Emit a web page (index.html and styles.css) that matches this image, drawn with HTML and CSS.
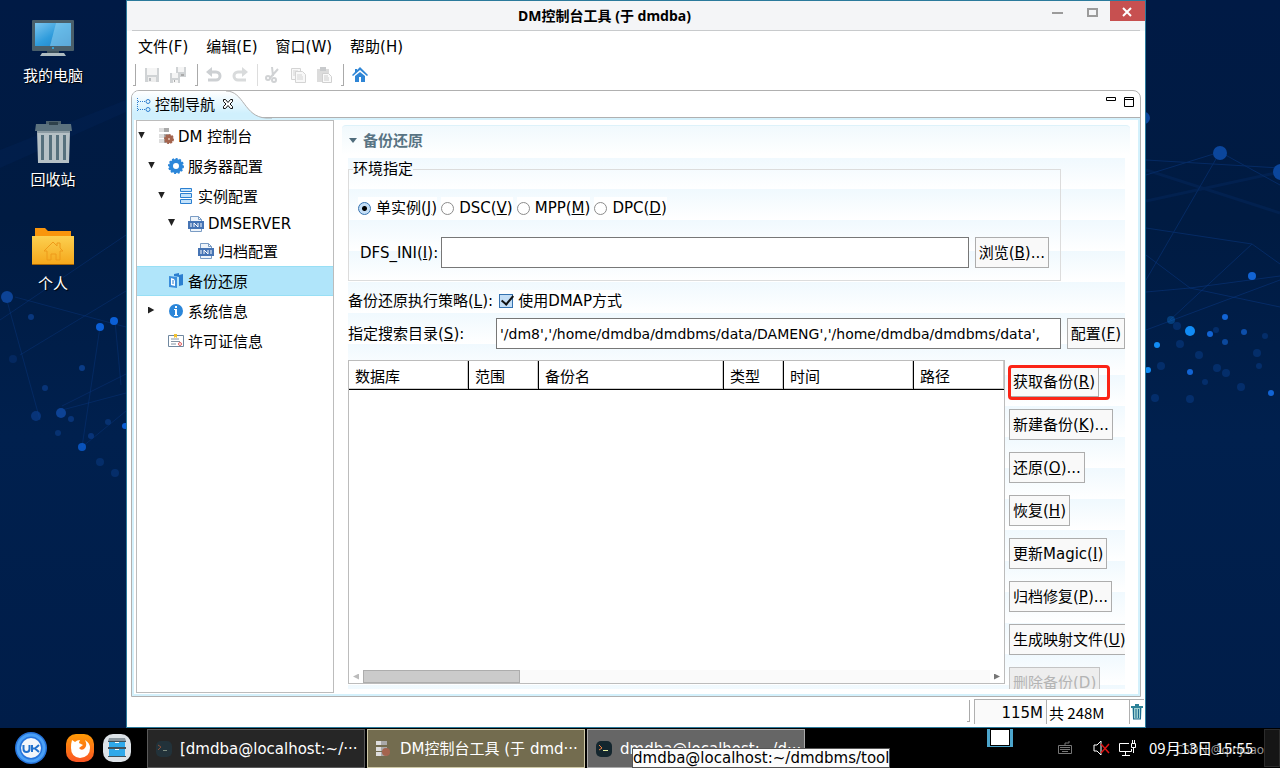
FILE: index.html
```html
<!DOCTYPE html>
<html lang="zh-CN">
<head>
    <meta charset="UTF-8">
    <title>DM控制台工具</title>
    <link rel="stylesheet" href="styles.css">
</head>
<body>
<div class="desktop">
    <!-- wallpaper, left and right parts keep to their own side -->
    <svg class="wall wall-left" width="126" height="728" viewBox="0 0 126 728">
        <g stroke="#0a3a85" stroke-width="1" opacity=".4">
            <path d="M15 297L126 327M62 406L126 374M62 410L126 393M100 327L82 447M115 321L121 385M82 447L126 411M0 320L126 235M20 355L126 291M6 297L40 420" fill="none"/>
        </g>
        <path d="M0 150L126 100V112L0 168z" fill="#0a3a85" opacity=".12"/>
        <g fill="#0d4396">
            <circle cx="7" cy="297" r="6"/><circle cx="31" cy="317" r="3" opacity=".7"/><circle cx="36" cy="416" r="5" opacity=".6"/>
            <circle cx="61" cy="413" r="5"/><circle cx="71" cy="419" r="3" opacity=".6"/><circle cx="82" cy="368" r="3" opacity=".8"/>
            <circle cx="45" cy="388" r="3" opacity=".6"/><circle cx="58" cy="433" r="3" opacity=".5"/><circle cx="91" cy="436" r="3" opacity=".6"/>
            <circle cx="108" cy="422" r="3" opacity=".5"/><circle cx="100" cy="462" r="4" opacity=".4"/><circle cx="115" cy="473" r="4" opacity=".4"/>
            <circle cx="13" cy="359" r="4" opacity=".3"/>
        </g>
        <g fill="#0b5fd6"><circle cx="100" cy="327" r="4"/><circle cx="114" cy="321" r="4"/><circle cx="82" cy="447" r="4" opacity=".8"/><circle cx="125" cy="426" r="3"/></g>
    </svg>
    <svg class="wall wall-right" width="134" height="728" viewBox="1146 0 134 728">
        <g stroke="#0a3a85" stroke-width="1" opacity=".5" fill="none">
            <path d="M1146 175L1220 152L1280 185M1220 152L1146 280M1146 228L1252 244L1280 264M1146 255L1190 288L1280 307M1146 292L1190 288L1280 276M1146 330L1280 280M1252 244L1170 320M1146 160L1280 168"/>
            <path d="M1146 170L1280 213M1146 201L1280 172" stroke-width="3" opacity=".4"/>
        </g>
        <g fill="#0b469c"><circle cx="1220" cy="153" r="7"/><circle cx="1281" cy="172" r="8"/><circle cx="1144" cy="118" r="6"/></g>
        <g fill="#1264d4"><circle cx="1252" cy="276" r="4"/><circle cx="1225" cy="317" r="3"/><circle cx="1210" cy="334" r="3"/><circle cx="1190" cy="372" r="3"/><circle cx="1271" cy="393" r="3"/><circle cx="1244" cy="332" r="3" opacity=".7"/><circle cx="1225" cy="342" r="3" opacity=".6"/></g>
        <g fill="#118cf5"><circle cx="1190" cy="331" r="5"/><circle cx="1171" cy="320" r="4" opacity=".3"/><circle cx="1157" cy="345" r="3"/><circle cx="1148" cy="370" r="3"/></g>
        <g fill="#0b469c" opacity=".4">
            <circle cx="1177" cy="326" r="4"/><circle cx="1180" cy="344" r="4"/><circle cx="1161" cy="366" r="4"/><circle cx="1199" cy="355" r="4"/><circle cx="1216" cy="330" r="3"/>
            <circle cx="1257" cy="353" r="4"/><circle cx="1217" cy="368" r="4"/><circle cx="1226" cy="373" r="4"/><circle cx="1241" cy="387" r="4"/><circle cx="1190" cy="399" r="4"/>
            <circle cx="1155" cy="398" r="4"/><circle cx="1265" cy="336" r="3"/><circle cx="1259" cy="366" r="3"/><circle cx="1205" cy="382" r="3"/>
        </g>
    </svg>

    <div class="shortcuts">
        <a class="shortcut" href="#computer">
            <svg width="44" height="44" viewBox="0 0 44 44">
                <defs><linearGradient id="screen" x1="0" y1="0" x2="1" y2="1"><stop offset="0" stop-color="#7cc5ee"/><stop offset=".5" stop-color="#2f9cdc"/><stop offset="1" stop-color="#1c7cc0"/></linearGradient></defs>
                <rect x="1" y="4" width="42" height="31" rx="1" fill="#4a5f6a"/>
                <rect x="4" y="7" width="36" height="23" fill="url(#screen)"/>
                <path d="M25 7h15v23H19z" fill="#9bd5f2" opacity=".5"/>
                <circle cx="22" cy="32" r="1" fill="#31b3f0"/>
                <path d="M16 35h12v2H16z" fill="#3d5059"/><path d="M9 40l2-3h22l2 3z" fill="#aebbc0"/>
            </svg>
            <span>我的电脑</span>
        </a>
        <a class="shortcut" href="#trash">
            <svg width="44" height="44" viewBox="0 0 44 44">
                <path d="M15 5V1h15v4" fill="#4e626d"/><path d="M5 4h35l1 7H4z" fill="#5c727e"/><path d="M18 2h9v3h-9z" fill="#2f424c"/>
                <path d="M6 11h33l-1 32H7z" fill="#b6c1c6"/>
                <path d="M10 15h3v25h-3zM18 15h3v25h-3zM25 15h3v25h-3zM32 15h3v25h-3z" fill="#56707d"/>
                <path d="M6 11h33v2H6z" fill="#8d9ca4"/>
            </svg>
            <span>回收站</span>
        </a>
        <a class="shortcut" href="#home">
            <svg width="44" height="44" viewBox="0 0 44 44">
                <defs><linearGradient id="folder" x1="0" y1="0" x2="0" y2="1"><stop offset="0" stop-color="#fcd050"/><stop offset="1" stop-color="#f5a81c"/></linearGradient></defs>
                <path d="M4 4h10l3 3h23v8H4z" fill="#f9950c"/>
                <path d="M1 12h42v28H1z" fill="url(#folder)"/><path d="M1 40h42v1H1z" fill="#a86404"/>
                <path d="M13 27l9-9 4 4v-3h3v5l3 3h-3v9h-4v-6h-5v6h-4v-9z" fill="none" stroke="#ee9a1a"/>
            </svg>
            <span>个人</span>
        </a>
    </div>

    <main class="window">
        <header class="titlebar">
            <h1>DM控制台工具 (于 dmdba)</h1>
            <div class="winbtns">
                <button aria-label="最小化"><svg width="35" height="20"><path d="M12 11h11v2H12z" fill="#9b9b9b"/></svg></button>
                <button aria-label="最大化"><svg width="35" height="20"><path d="M13 8h9v7h-9z" fill="none" stroke="#9b9b9b" stroke-width="2"/></svg></button>
                <button class="close" aria-label="关闭"><svg width="35" height="20"><path d="M13 7l8 8M21 7l-8 8" stroke="#fff" stroke-width="2"/></svg></button>
            </div>
        </header>
        <nav class="menubar">
            <button>文件(F)</button>
            <button>编辑(E)</button>
            <button>窗口(W)</button>
            <button>帮助(H)</button>
        </nav>
        <div class="toolbar">
            <i class="grip"></i>
            <button disabled aria-label="保存"><svg width="16" height="16"><path d="M1 1h14v14H1z" fill="#d0d3d5"/><path d="M3 1h10v7H3z" fill="#f5f5f5"/><path d="M4 10h8v5H4z" fill="#eee"/><path d="M5 11h2v3H5z" fill="#b9bcbf"/></svg></button>
            <button disabled aria-label="全部保存"><svg width="16" height="16"><path d="M6 0h10v10H6zM0 6h10v10H0z" fill="#d0d3d5"/><path d="M8 0h6v5H8zM2 6h6v5H2zM3 13h5v3H3z" fill="#f5f5f5"/><path d="M4 13h1v2H4zM11 7h3v2h-3z" fill="#aaa"/></svg></button>
            <i class="grip"></i>
            <button disabled aria-label="撤销"><svg width="16" height="16"><path d="M4 5h6a4 4 0 0 1 0 8H2" fill="none" stroke="#cdd0d3" stroke-width="3"/><path d="M0 5l6-5v10z" fill="#cdd0d3"/></svg></button>
            <button disabled aria-label="重做"><svg width="16" height="16"><path d="M12 5H6a4 4 0 0 0 0 8h8" fill="none" stroke="#d9dbdc" stroke-width="3"/><path d="M16 5l-6-5v10z" fill="#d9dbdc"/></svg></button>
            <i class="line"></i>
            <button disabled aria-label="剪切"><svg width="16" height="16" fill="none" stroke="#d0d2d4" stroke-width="2"><path d="M8 0l1 9M14 2L6 11"/><circle cx="4" cy="11" r="2"/><circle cx="10" cy="13" r="2"/></svg></button>
            <button disabled aria-label="复制"><svg width="16" height="16" fill="#f8f8f8" stroke="#d4d4d4"><path d="M1.500 1.500h9v11h-9z"/><path d="M5.500 4.500h7l3 3v8h-10z"/><path d="M7 8h5M7 10h6M7 12h6M3 4h5M3 6h2M3 8h2"/></svg></button>
            <button disabled aria-label="粘贴"><svg width="16" height="16"><path d="M1 2h12v13H1z" fill="#dcdcdc"/><path d="M4 0h6v4H4z" fill="#c8cacc"/><path d="M6.500 6.500h6l3 3v6h-9z" fill="#fafafa" stroke="#d0d0d0"/><path d="M8 9h4M8 11h5M8 13h5" stroke="#ccc"/></svg></button>
            <i class="grip"></i>
            <button aria-label="主页"><svg width="16" height="16"><path d="M8 0l8 8-1 1-7-6-7 6-1-1 3-3V2h2v1z" fill="#2f86d6"/><path d="M3 9l5-4 5 4v6H9v-5H7v5H3z" fill="#2f86d6"/></svg></button>
        </div>

        <section class="view">
            <div class="tabs">
                <svg class="tab-shape" width="140" height="28" viewBox="0 0 140 28">
                    <defs><linearGradient id="tabfill" x1="0" y1="0" x2="0" y2="1"><stop offset="0" stop-color="#fff"/><stop offset=".8" stop-color="#d0f0fd"/></linearGradient></defs>
                    <path d="M0 28V8Q0 0 8 0H94C112 0 112 26 134 27H140V28z" fill="url(#tabfill)"/>
                    <path d="M94 0C112 0 112 26 134 27H140" fill="none" stroke="#b0b0b0"/>
                </svg>
                <div class="tab">
                    <svg width="14" height="14" fill="none" stroke="#2f7fd0"><path d="M.5 0v14M1 3.500h8M1 11.500h8" stroke-dasharray="1 1"/><circle cx="11" cy="3.500" r="2"/><circle cx="11" cy="11.500" r="2"/></svg>
                    <span>控制导航</span>
                    <button aria-label="关闭"><svg width="12" height="12"><path d="M1.500 1.500h2l2.500 3 2.500-3h2v2L8 6l2.500 2.500v2h-2L6 7.500l-2.500 3h-2v-2L4 6 1.500 3.500z" fill="#fff" stroke="#111"/></svg></button>
                </div>
                <div class="tab-tools">
                    <button aria-label="最小化"><svg width="10" height="10"><path d="M.5 .5h9v3h-9z" fill="#fff" stroke="#000"/></svg></button>
                    <button aria-label="最大化"><svg width="10" height="10"><path d="M.5 .5h9v9h-9zM0 2.500h10" fill="#fff" stroke="#000"/></svg></button>
                </div>
            </div>

            <div class="view-body">
                <ul class="tree">
                    <li class="node l1"><i class="open"></i>
                        <svg width="16" height="16"><path d="M1 0h10v4H1zM1 6h10v4H1zM1 11h10v4H1z" fill="#aaa"/><path d="M1 0h5v4H1zM1 6h5v4H1zM1 11h5v4H1z" fill="#ddd"/><circle cx="11" cy="11" r="4" fill="#a4644e"/><circle cx="11" cy="11" r="4" fill="none" stroke="#a4644e" stroke-width="2" stroke-dasharray="2 1"/><circle cx="11" cy="11" r="1" fill="#e8cabb"/></svg>
                        <span>DM 控制台</span></li>
                    <li class="node l2"><i class="open"></i>
                        <svg width="16" height="16"><circle cx="8" cy="8" r="5" fill="none" stroke="#2b86d9" stroke-width="4"/><circle cx="8" cy="8" r="7" fill="none" stroke="#2b86d9" stroke-width="2" stroke-dasharray="2 1.600"/></svg>
                        <span>服务器配置</span></li>
                    <li class="node l3"><i class="open"></i>
                        <svg width="16" height="16" fill="#c3e2fb" stroke="#2b7fd0"><path d="M2.500 .5h11v3h-11zM2.500 5.500h11v4h-11zM2.500 11.500h11v4h-11z"/></svg>
                        <span>实例配置</span></li>
                    <li class="node l4 short"><i class="open"></i>
                        <svg width="16" height="16"><path d="M2.500 6V.5h8l3 3V6M2.500 13v2.500h11V13M10.500 .5v3h3" fill="#eef4fa" stroke="#7a9cc4"/><path d="M0 5h16v8H0z" fill="#4674b4"/><path d="M3 7v4M6 11V7l4 4V7M13 7v4" fill="none" stroke="#fff"/></svg>
                        <span>DMSERVER</span></li>
                    <li class="node l5"><i></i>
                        <svg width="16" height="16"><path d="M2.500 6V.5h8l3 3V6M2.500 13v2.500h11V13M10.500 .5v3h3" fill="#eef4fa" stroke="#7a9cc4"/><path d="M0 5h16v8H0z" fill="#4674b4"/><path d="M3 7v4M6 11V7l4 4V7M13 7v4" fill="none" stroke="#fff"/></svg>
                        <span>归档配置</span></li>
                    <li class="node l2 selected"><i></i>
                        <svg width="16" height="16"><path d="M6 1l5-1v2l4-1v11l-4 1V4L6 3z" fill="#2b7fd0"/><path d="M1 3l8 1v11l-8-1z" fill="#3b8edc"/><path d="M3 5l3 1 1 2v5l-4-1z" fill="#fff"/><path d="M4 8h2M4 10h2" stroke="#2b7fd0"/></svg>
                        <span>备份还原</span></li>
                    <li class="node l2"><i class="closed"></i>
                        <svg width="16" height="16"><circle cx="8" cy="8" r="7" fill="#2b86d9"/><path d="M7 3h2v2H7zM6 6h3v6h1v1H6v-1h1V7H6z" fill="#fff"/></svg>
                        <span>系统信息</span></li>
                    <li class="node l2"><i></i>
                        <svg width="16" height="16"><path d="M.5 2.500h15v11H.5z" fill="#fff" stroke="#7088a0"/><path d="M3 6h8M3 8.500h9M3 11h5" stroke="#8494a4"/><path d="M6 1h3v4L7.500 4 6 5z" fill="#f2c12e"/><circle cx="12" cy="11" r="1.500" fill="#fff" stroke="#e05a5a"/></svg>
                        <span>许可证信息</span></li>
                </ul>

                <div class="editor">
                    <h2 class="section-title"><svg width="10" height="6"><path d="M1 0h8L5 5z" fill="#4f6c7c"/></svg>备份还原</h2>
                    <form class="form" onsubmit="return false">
                        <fieldset class="env">
                            <legend>环境指定</legend>
                            <div class="modes">
                                <label><input type="radio" name="mode" checked><span>单实例(<u>J</u>)</span></label>
                                <label><input type="radio" name="mode"><span>DSC(<u>V</u>)</span></label>
                                <label><input type="radio" name="mode"><span>MPP(<u>M</u>)</span></label>
                                <label><input type="radio" name="mode"><span>DPC(<u>D</u>)</span></label>
                            </div>
                            <div class="dfs">
                                <label for="dfs_ini">DFS_INI(<u>I</u>):</label>
                                <input type="text" id="dfs_ini">
                                <button class="btn">浏览(<u>B</u>)...</button>
                            </div>
                        </fieldset>
                        <div class="policy">
                            <span>备份还原执行策略(<u>L</u>):</span>
                            <label><input type="checkbox" checked><span>使用DMAP方式</span></label>
                        </div>
                        <div class="search">
                            <label for="search_dir">指定搜索目录(<u>S</u>):</label>
                            <input type="text" id="search_dir" value="'/dm8','/home/dmdba/dmdbms/data/DAMENG','/home/dmdba/dmdbms/data',">
                            <button class="btn">配置(<u>F</u>)</button>
                        </div>
                        <div class="backups">
                            <div class="list">
                                <table>
                                    <colgroup><col class="c-db"><col class="c-range"><col class="c-name"><col class="c-type"><col class="c-time"><col></colgroup>
                                    <thead><tr><th>数据库</th><th>范围</th><th>备份名</th><th>类型</th><th>时间</th><th>路径</th></tr></thead>
                                </table>
                                <div class="hscroll"><i class="left"></i><div class="track"><div class="thumb"></div></div><i class="right"></i></div>
                            </div>
                            <div class="actions">
                                <div class="marked"><button class="btn">获取备份(<u>R</u>)</button></div>
                                <button class="btn">新建备份(<u>K</u>)...</button>
                                <button class="btn">还原(<u>O</u>)...</button>
                                <button class="btn">恢复(<u>H</u>)</button>
                                <button class="btn">更新Magic(<u>I</u>)</button>
                                <button class="btn">归档修复(<u>P</u>)...</button>
                                <button class="btn">生成映射文件(<u>U</u>)</button>
                                <button class="btn" disabled>删除备份(<u>D</u>)</button>
                            </div>
                        </div>
                    </form>
                </div>
            </div>
        </section>

        <footer class="status">
            <i class="grip"></i>
            <div class="heap"><span class="used">115M</span><span class="total">共 248M</span>
                <button aria-label="垃圾回收"><svg width="12" height="16"><path d="M0 2h12v2H0zM4 0h4v2H4z" fill="#2c8298"/><path d="M1 4h10l-1 11H2z" fill="#9ed0d0"/><path d="M2.500 4v11M5 5v9M7.500 5v9M9.500 4v11M2 15h8" stroke="#1d6a90"/></svg></button>
            </div>
        </footer>
    </main>
</div>

<div class="taskbar">
    <button class="launch start" aria-label="开始"><svg width="34" height="34"><circle cx="17" cy="17" r="16" fill="#2674dc"/><circle cx="17" cy="17" r="13" fill="none" stroke="#4aa0f6" stroke-width="3"/><circle cx="17" cy="17" r="10" fill="#f3f6fa"/><path d="M9.500 14v4q0 3 3 3t3-3v-4M18 14v7M25 14l-4 3.500h-2.500M21 17.500l4 3.500" fill="none" stroke="#2070cc" stroke-width="2"/></svg></button>
    <button class="launch firefox" aria-label="Firefox"><svg width="28" height="28"><defs><linearGradient id="fox" x1="0" y1="0" x2="0" y2="1"><stop offset="0" stop-color="#ff9a05"/><stop offset="1" stop-color="#fb5524"/></linearGradient></defs><rect width="28" height="28" rx="10" fill="url(#fox)"/><path d="M6 6l3 2q2-2 5-2-1 2-1 3l4 2-4 3q2 3 5 1 4-3 1-9 5 3 5 8 0 9-10 10Q5 23 5 14q0-5 1-8z" fill="#fff"/></svg></button>
    <button class="launch" aria-label="文件管理器"><svg width="28" height="28"><rect width="28" height="28" rx="10" fill="#dde3e8"/><path d="M6 4h16l1 3H5z" fill="#8a979f"/><path d="M6 8h16v5H6zM6 15h16v7H6z" fill="#2fa9ea"/><path d="M5 7h18v1H5zM5 13h18v2H5zM5 22h18v1H5z" fill="#41525c"/><path d="M12 8.500h4M12 15.500h4" stroke="#fff"/></svg></button>
    <div class="tasks">
        <button class="task"><svg width="16" height="16"><rect width="16" height="16" rx="5" fill="#22323a"/><path d="M2 4l3 2-3 3" fill="none" stroke="#8b4f38"/><path d="M7 9.500h4" stroke="#7d8c80"/></svg><span>[dmdba@localhost:~/···</span></button>
        <button class="task active"><svg width="16" height="16"><path d="M0 0h11v4H0zM0 6h11v4H0zM0 11h11v4H0z" fill="#a9a9a9"/><path d="M0 0h5v4H0zM0 6h5v4H0zM0 11h5v4H0z" fill="#ddd"/><circle cx="10" cy="11" r="4" fill="#a4644e"/></svg><span>DM控制台工具 (于 dmd···</span></button>
        <button class="task hover"><svg width="16" height="16"><rect width="16" height="16" rx="5" fill="#14262e"/><path d="M3 4l3 3-3 2" fill="none" stroke="#f08040"/><path d="M7 9.500h5" stroke="#e4efa0"/></svg><span>dmdba@localhost:~/d···</span><span class="tip">dmdba@localhost:~/dmdbms/tool</span></button>
    </div>
    <div class="tray">
        <div class="pager"></div>
        <svg class="kbd" width="14" height="14" fill="none" stroke="#777"><path d="M.5 4.500h13v8H.5zM7 4V2h4V0M2 6.500h10M2 8.500h10M4 10.500h6"/></svg>
        <svg class="vol" width="18" height="16"><path d="M1 5h3l4-4v14l-4-4H1z" fill="none" stroke="#fff"/><path d="M8 4l8 9M16 4l-8 9" stroke="#e01414" stroke-width="1.500"/></svg>
        <svg class="net" width="17" height="16" fill="none" stroke="#fff"><path d="M10 3.500H.5v8h12V9M6.500 12v3M3 15.500h8M13.500 0v3M15.500 0v3M12.500 3.500h4v4h-4zM14.500 8v5"/></svg>
        <time class="clock">09月13日 15:55</time>
        <button class="show" aria-label="显示桌面"></button>
        <span class="sign">CSDN @qinjuao</span>
    </div>
</div>
</body>
</html>
```

FILE: styles.css
```css
*,
*::after {
    box-sizing: border-box;
}

body {
    margin: 0;
    height: 100vh;
    display: flex;
    flex-direction: column;
    overflow: hidden;
    background: #000;
    color: #000;
    font: 15px/22px "DejaVu Sans", "Noto Sans CJK SC", sans-serif;
}

button {
    font: inherit;
    color: inherit;
    background: none;
    border: 0;
    padding: 0;
    white-space: nowrap;
}

svg {
    display: block;
    flex: none;
}

i {
    flex: none;
}

/* desktop */
.desktop {
    flex: 1;
    min-height: 0;
    position: relative;
    display: grid;
    grid-template-columns: 126px minmax(0, 1fr);
    padding-right: 134px;
    background: linear-gradient(#001a45, #001b42 30%, #00204e 60%, #001d49);
}

.wall {
    position: absolute;
    top: 0;
}

.wall-left {
    left: 0;
}

.wall-right {
    right: 0;
}

.shortcuts {
    position: relative;
    width: 106px;
    padding-top: 16px;
    display: flex;
    flex-direction: column;
    gap: 33px;
}

.shortcut {
    display: flex;
    flex-direction: column;
    align-items: center;
    gap: 5px;
    color: #fff;
    text-decoration: none;
    text-shadow: 1px 1px 1px #000;
}

/* window */
.window {
    position: relative;
    display: flex;
    flex-direction: column;
    min-height: 0;
    background: #fff;
    border: 1px solid #2b7a9c;
}

.titlebar {
    position: relative;
    height: 30px;
    display: flex;
    align-items: center;
    background: #f4f5f7;
    flex: none;
}

.titlebar::after {
    content: "";
    position: absolute;
    left: 5px;
    right: 5px;
    bottom: 0;
    border-bottom: 1px solid #c8cacc;
}

.titlebar h1 {
    margin: 0;
    flex: 1;
    padding-left: 42px;
    text-align: center;
    font: bold 14px/22px "Noto Sans", "Noto Sans CJK SC", sans-serif;
}

.winbtns {
    display: flex;
    align-self: flex-start;
}

.close {
    background: #c75050;
}

.menubar {
    display: flex;
    gap: 18px;
    padding: 4px 11px;
    height: 32px;
    flex: none;
}

.toolbar {
    display: flex;
    align-items: center;
    height: 24px;
    padding-left: 6px;
    flex: none;
}

.toolbar button {
    width: 26px;
    height: 22px;
    padding-left: 4px;
}

.grip {
    width: 3px;
    height: 22px;
    border-right: 1px solid #aaa;
    border-bottom: 1px solid #aaa;
}

.toolbar .grip {
    margin: 0 4px 0 0;
}

.toolbar button + .grip {
    margin-left: 3px;
}

.line {
    width: 1px;
    height: 22px;
    margin: 0 2px 0 3px;
    background: #ddd;
}

/* view with tab */
.view {
    flex: 1;
    min-height: 0;
    margin: 3px 4px 0;
    display: flex;
    flex-direction: column;
    border: 1px solid #b0b0b0;
    border-radius: 8px 8px 0 0;
}

.tabs {
    position: relative;
    height: 27px;
    flex: none;
    display: flex;
    justify-content: space-between;
    border-bottom: 1px solid #b0b0b0;
}

.tab-shape {
    position: absolute;
    left: 0;
    top: 0;
}

.tab {
    position: relative;
    display: flex;
    align-items: center;
    padding: 2px 0 0 5px;
    gap: 4px;
}

.tab button {
    margin-left: 3px;
    padding-bottom: 2px;
}

.tab-tools {
    display: flex;
    gap: 8px;
    padding: 6px 6px 0 0;
}

.tab-tools button {
    height: 10px;
}

.view-body {
    flex: 1;
    min-height: 0;
    display: flex;
    border: 2px solid #d4f1fc;
    padding: 0 0 1px 2px;
}

.tree {
    width: 198px;
    flex: none;
    margin: 0;
    padding: 0;
    list-style: none;
    border: 1px solid #bcbcbc;
}

.node {
    display: flex;
    align-items: center;
    height: 30px;
    gap: 4px;
}

.node i {
    width: 7px;
    height: 7px;
    margin: 0 9px 2px 1px;
}

.node span {
    margin-top: 1px;
}

.node .open {
    background: #222;
    clip-path: polygon(0 0, 100% 0, 50% 100%);
}

.node .closed {
    background: #222;
    clip-path: polygon(0 0, 90% 50%, 0 100%);
}

.l2 {
    padding-left: 10px;
}

.l3 {
    padding-left: 20px;
}

.l4 {
    padding-left: 30px;
}

.l5 {
    padding-left: 40px;
}

.short {
    height: 25px;
}

.selected {
    background: #b0e5fa;
    border: solid #98dff5;
    border-width: 1px 0;
}

.editor {
    flex: 1;
    min-width: 0;
    display: flex;
    flex-direction: column;
    margin: 5px 8px 4px 8px;
}

.section-title {
    margin: 0;
    height: 33px;
    flex: none;
    display: flex;
    align-items: center;
    gap: 5px;
    padding: 0 0 2px 6px;
    font-size: 15px;
    line-height: 22px;
    color: #587484;
    border-radius: 4px 4px 0 0;
    border-top: 1px solid #ddf2fa;
    background: linear-gradient(#f0f9fd, #fff 90%);
}

.form {
    flex: 1;
    min-height: 0;
    margin: 0 5px 0 6px;
    display: flex;
    flex-direction: column;
    overflow: hidden;
    background: repeating-linear-gradient(#f0f9fe 0, #fff 31px);
}

.env {
    margin: 0 64px 0 0;
    padding: 17px 11px 12px 9px;
    border: 1px solid #dcdcdc;
}

.env legend {
    margin-left: -5px;
    padding: 0;
}

.modes {
    display: flex;
    gap: 4px;
}

.modes label {
    display: flex;
    align-items: center;
    gap: 5px;
    background: #fff;
}

input {
    margin: 0;
    font: inherit;
    color: inherit;
}

input[type="radio"] {
    appearance: none;
    width: 13px;
    height: 13px;
    border: 1px solid #8c8c8c;
    border-radius: 50%;
    background: #fff;
}

input[type="radio"]:checked {
    border-color: #3572b0;
    background: radial-gradient(#000 2px, #c4def6 3px);
}

input[type="checkbox"] {
    appearance: none;
    width: 14px;
    height: 14px;
    border: 1px solid #3572b0;
    background: #c4def6;
    position: relative;
}

input[type="checkbox"]:checked::after {
    content: "";
    position: absolute;
    left: 4px;
    top: -2px;
    width: 7px;
    height: 12px;
    border: solid #111;
    border-width: 0 2px 2px 0;
    transform: rotate(40deg);
}

input[type="text"] {
    flex: 1;
    min-width: 0;
    height: 31px;
    padding: 0 3px;
    border: 1px solid #777;
    background: #fff;
    font-size: 14px;
}

.dfs {
    display: flex;
    align-items: center;
    margin-top: 18px;
    padding-left: 2px;
}

.dfs label {
    width: 81px;
}

.dfs .btn,
.search .btn {
    margin-left: 6px;
}

.btn {
    height: 31px;
    padding: 1px 3px 0;
    flex: none;
    border: 1px solid #adadad;
    background: #f9f9f9;
}

.btn:disabled {
    color: #b4b4b4;
    border-color: #c4c4c4;
    background: #eee;
}

.policy {
    display: flex;
    align-items: center;
    gap: 6px;
    margin-top: 9px;
}

.policy label {
    display: flex;
    align-items: center;
    gap: 5px;
    background: #fff;
}

.search {
    display: flex;
    align-items: center;
    margin-top: 6px;
}

.search label {
    width: 148px;
}

.backups {
    flex: 1;
    min-height: 0;
    display: flex;
    margin-top: 11px;
}

.list {
    flex: 1;
    min-width: 0;
    margin-bottom: 5px;
    display: flex;
    flex-direction: column;
    justify-content: space-between;
    background: #fff;
    border: 1px solid #bcbcbc;
}

table {
    width: 100%;
    table-layout: fixed;
    border-collapse: separate;
    border-spacing: 0;
}

th {
    height: 29px;
    padding: 4px 6px 0;
    text-align: left;
    font-weight: normal;
    border-bottom: 1px solid #000;
    border-right: 1px solid #000;
    box-shadow: inset -1px -1px #ccc;
}

th:last-child {
    border-right: 0;
}

.c-db {
    width: 120px;
}

.c-range {
    width: 70px;
}

.c-name {
    width: 185px;
}

.c-type {
    width: 60px;
}

.c-time {
    width: 130px;
}

.hscroll {
    display: flex;
    align-items: center;
}

.hscroll i {
    width: 6px;
    height: 6px;
    margin: 0 4px;
}

.hscroll .left {
    background: #bbb;
    clip-path: polygon(100% 0, 0 50%, 100% 100%);
}

.hscroll .right {
    background: #777;
    clip-path: polygon(0 0, 100% 50%, 0 100%);
}

.track {
    flex: 1;
    background: #fafafa;
}

.thumb {
    width: 25%;
    height: 13px;
    background: #cbcbcb;
    border: 1px solid #adadad;
}

.actions {
    width: 120px;
    flex: none;
    display: flex;
    flex-direction: column;
    align-items: flex-start;
    gap: 12px;
    padding: 6px 0 0 4px;
    overflow: hidden;
}

.marked {
    position: relative;
}

.marked::after {
    content: "";
    position: absolute;
    left: -1px;
    top: -1px;
    width: 102px;
    height: 35px;
    border: 3px solid #fb2416;
    border-radius: 4px;
}

/* status bar */
.status {
    height: 30px;
    flex: none;
    display: flex;
    justify-content: flex-end;
    align-items: flex-end;
    gap: 4px;
    padding: 0 1px 3px 0;
}

.status .grip {
    margin-bottom: 2px;
}

.heap {
    display: flex;
    height: 25px;
    border: solid #b0b0b0;
    border-width: 1px 0 0 1px;
}

.heap span {
    padding-top: 2px;
    border-right: 1px solid #b0b0b0;
}

.used {
    width: 72px;
    padding-right: 3px;
    text-align: right;
    background: #fafafa;
}

.total {
    width: 83px;
    padding-left: 2px;
    font-family: "Noto Sans CJK SC", sans-serif;
}

.heap button {
    padding: 0 1px;
}

/* taskbar */
.taskbar {
    height: 40px;
    flex: none;
    display: flex;
    align-items: center;
    padding-left: 14px;
    background: #000;
    color: #fff;
}

.launch {
    margin-right: 9px;
}

.start {
    margin-right: 18px;
}

.tasks {
    flex: 1;
    display: flex;
    gap: 2px;
    margin-left: 7px;
    align-self: flex-end;
}

.task {
    position: relative;
    flex: 0 1 218px;
    height: 39px;
    display: flex;
    align-items: center;
    gap: 8px;
    padding-left: 8px;
    background: #262626;
    border: 1px solid #5a5a5a;
}

.active {
    background: #736c4f;
    border-color: #cfc9a8;
}

.hover {
    background: #666;
    border-color: #aaa;
}

.tip {
    position: absolute;
    left: 44px;
    top: 18px;
    height: 20px;
    line-height: 18px;
    color: #000;
    background: #fcfcfc;
    border: 1px solid #555;
}

.tray {
    position: relative;
    display: flex;
    align-items: center;
    align-self: stretch;
}

.pager {
    align-self: flex-start;
    width: 26px;
    height: 18px;
    margin: 1px 45px 0 0;
    background: #fff;
    border: solid #4ca5cc;
    border-width: 0 3px 1px;
    box-shadow: inset 0 0 0 1px #000;
}

.vol {
    margin-left: 21px;
}

.net {
    margin-left: 8px;
}

.clock {
    width: 115px;
    margin-left: 13px;
    font-family: "Noto Sans CJK SC", sans-serif;
}

.show {
    width: 16px;
    height: 38px;
    background: #151515;
    border: 1px solid #2c2c2c;
}

.sign {
    position: absolute;
    right: 16px;
    top: 12px;
    font: 12px/20px "Noto Sans", sans-serif;
    color: rgba(255, 255, 255, .6);
}
```
